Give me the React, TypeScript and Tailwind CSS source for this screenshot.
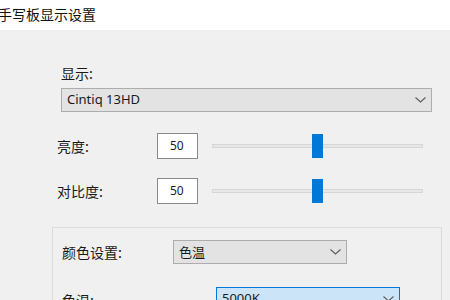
const cjk = "font-['Microsoft_YaHei','Noto_Sans_CJK_SC',sans-serif]";
const latin = "font-['Segoe_UI','Noto_Sans','Noto_Sans_CJK_SC',sans-serif]";

function Chevron() {
  return (
    <svg width="11" height="6" viewBox="0 0 11 6" className="shrink-0">
      <path d="M0.5 0.5 L5.5 5 L10.5 0.5" fill="none" stroke="#5f5f5f" strokeWidth="1.2" />
    </svg>
  );
}

function Select({
  value,
  className,
  active,
}: {
  value: string;
  className: string;
  active?: boolean;
}) {
  return (
    <div
      className={
        "flex items-center justify-between border pl-[5px] pr-[5px] text-[13px] text-[#1a1a1a] " +
        (active ? "border-[#0078d7] bg-[#cce4f7] " : "border-[#adadad] bg-[#e3e3e3] ") +
        className
      }
    >
      <span>{value}</span>
      <Chevron />
    </div>
  );
}

function SliderRow({ label, value }: { label: string; value: number }) {
  return (
    <div className="flex h-[26px] items-center">
      <div className={`w-[100px] text-[14px] text-[#1a1a1a] ${cjk}`}>{label}</div>
      <div
        className={`flex h-[26px] w-[41px] items-center border border-[#8a8a8a] bg-white pl-[12px] text-[12px] text-[#1a1a1a] ${latin}`}
      >
        {value}
      </div>
      <div className="relative ml-[14px] h-[4px] w-[211px] border border-[#d6d6d6] bg-[#e7e7e7]">
        <div
          className="absolute top-[-11px] h-[24px] w-[11px] bg-[#0078d7]"
          style={{ left: `calc(${value}% - 6px)` }}
        />
      </div>
    </div>
  );
}

export default function App() {
  return (
    <div className={`h-[300px] w-[450px] overflow-hidden bg-[#f0f0f0] ${cjk}`}>
      <div className="flex h-[30px] items-center bg-white">
        <span className="-ml-[2px] pb-[2px] text-[14px] text-[#111]">手写板显示设置</span>
      </div>

      <div className="pl-[61px]">
        <div className="mt-[34px] h-[18px] text-[14px] leading-[18px] text-[#1a1a1a]">显示:</div>
        <Select value="Cintiq 13HD" className={`mt-[6px] h-[24px] w-[371px] ${latin} text-[12px]`} />
      </div>

      <div className="mt-[21px] flex flex-col gap-[19px] pl-[57px]">
        <SliderRow label="亮度:" value={50} />
        <SliderRow label="对比度:" value={50} />
      </div>

      <div className="ml-[52px] mt-[23px] h-[120px] w-[390px] border border-[#dcdcdc] pl-[9px] pt-[12px]">
        <div className="flex items-center">
          <div className="w-[111px] text-[14px] text-[#1a1a1a]">颜色设置:</div>
          <Select value="色温" className="h-[24px] w-[174px]" />
        </div>
        <div className="mt-[23px] flex items-start">
          <div className="w-[154px] pt-[3px] text-[14px] text-[#1a1a1a]">色温:</div>
          <Select value="5000K" active className={`h-[24px] w-[184px] ${latin} text-[12px]`} />
        </div>
      </div>
    </div>
  );
}
